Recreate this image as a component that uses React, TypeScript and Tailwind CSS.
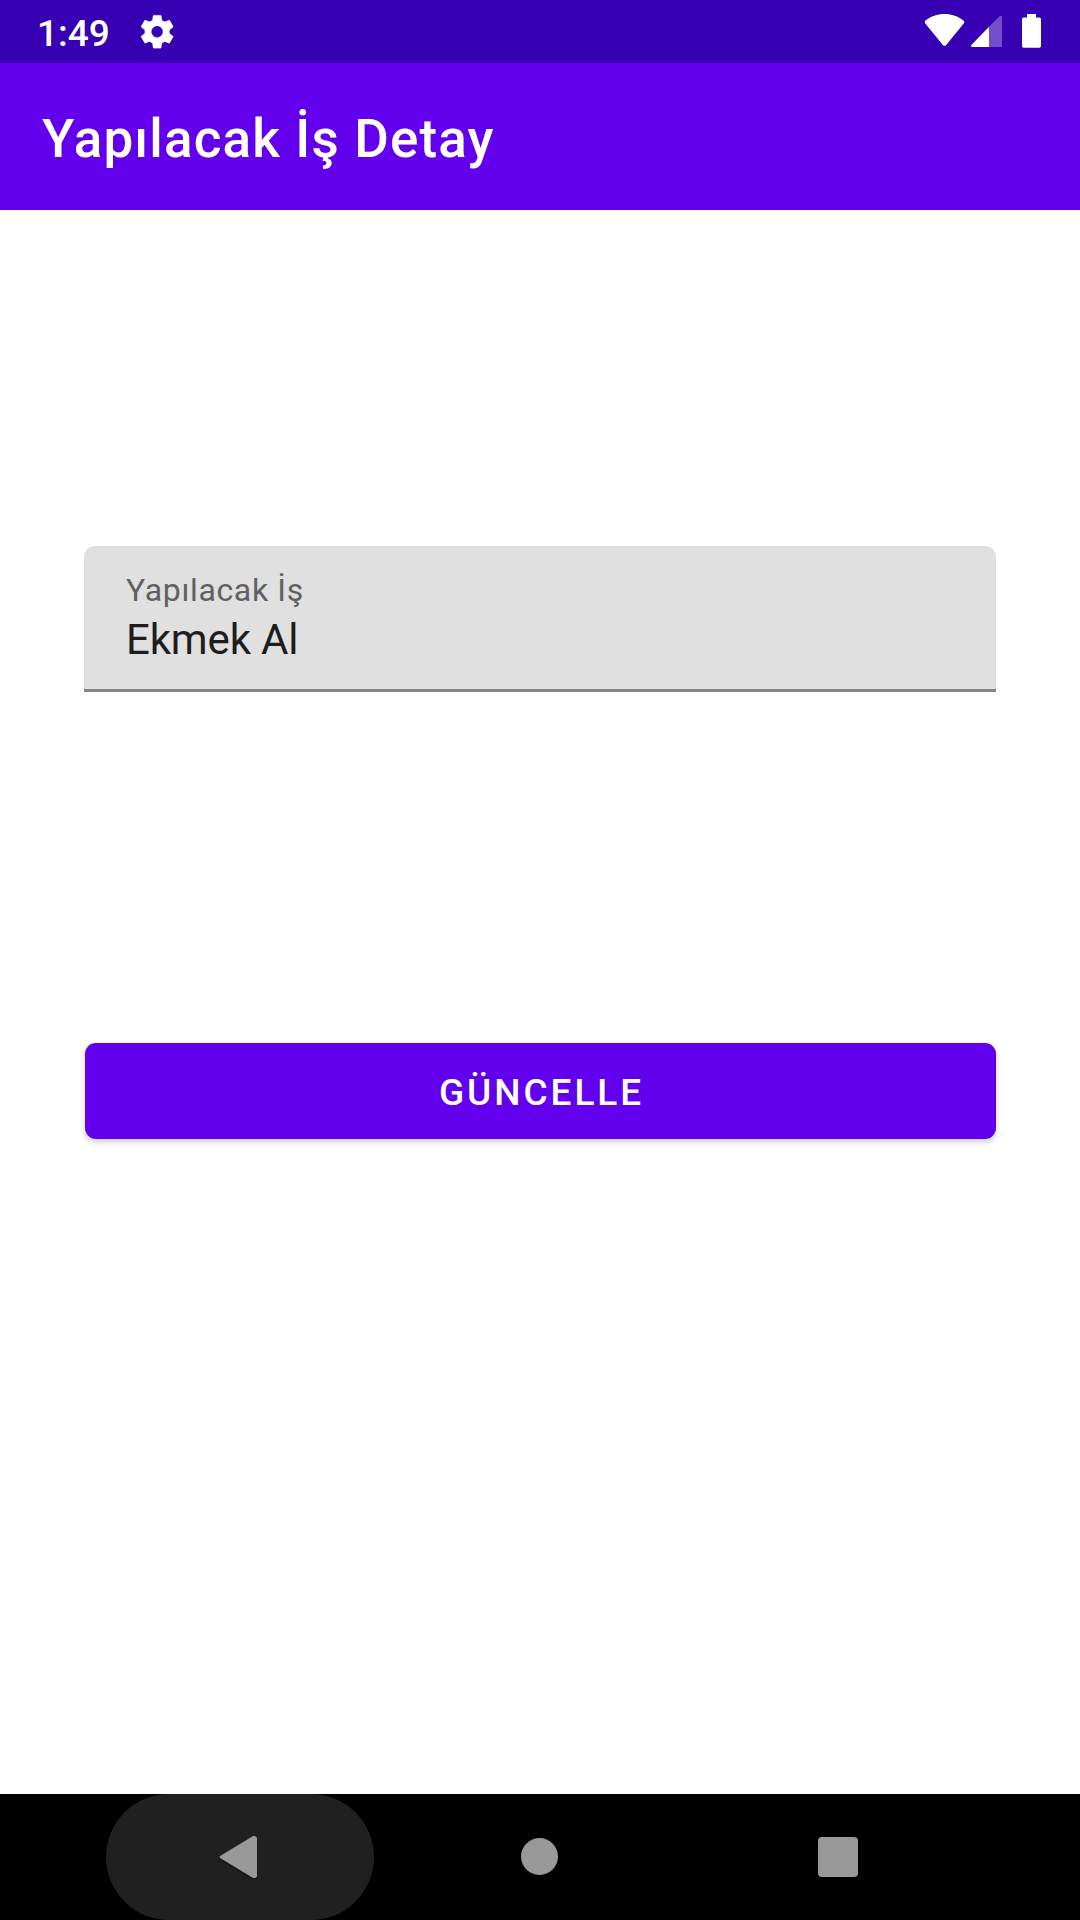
const gearPath =
  "M19.43 12.98c.04-.32.07-.64.07-.98s-.03-.66-.07-.98l2.11-1.65c.19-.15.24-.42.12-.64l-2-3.46c-.12-.22-.39-.3-.61-.22l-2.49 1c-.52-.4-1.08-.73-1.69-.98l-.38-2.65C14.46 2.18 14.25 2 14 2h-4c-.25 0-.46.18-.49.42l-.38 2.65c-.61.25-1.17.59-1.69.98l-2.49-1c-.23-.09-.49 0-.61.22l-2 3.46c-.13.22-.07.49.12.64l2.11 1.65c-.04.32-.07.65-.07.98s.03.66.07.98l-2.11 1.65c-.19.15-.24.42-.12.64l2 3.46c.12.22.39.3.61.22l2.49-1c.52.4 1.08.73 1.69.98l.38 2.65c.03.24.24.42.49.42h4c.25 0 .46-.18.49-.42l.38-2.65c.61-.25 1.17-.59 1.69-.98l2.49 1c.23.09.49 0 .61-.22l2-3.46c.12-.22.07-.49-.12-.64l-2.11-1.65zM12 15.5c-1.93 0-3.5-1.57-3.5-3.5s1.57-3.5 3.5-3.5 3.5 1.57 3.5 3.5-1.57 3.5-3.5 3.5z";

function StatusBar() {
  return (
    <header className="flex h-[63px] justify-between bg-[#3700b3] pr-[39px] pl-[37px] text-white">
      <div className="flex">
        <span className="w-[100px] pt-[12px] text-[37px] leading-[43px] font-medium">1:49</span>
        <svg className="mt-[12px] h-[40px] w-[40px]" viewBox="0 0 24.2 24.2" fill="currentColor">
          <path d={gearPath} stroke="currentColor" strokeWidth="0.15" transform="translate(0.2 -0.1)" />
        </svg>
      </div>
      <div className="flex pt-[14px]">
        <svg className="mr-[6px] h-[34px] w-[41px]" viewBox="0 0 41 34" fill="currentColor">
          <path d="M1.6 6.6C6.8 2.3 13.3 0 20.5 0s13.7 2.3 18.9 6.6c1 .8 1.1 2 .3 3L22 31.2c-.9 1-2.1 1-3 0L1.3 9.6c-.8-1-.7-2.2.3-3z" />
        </svg>
        <svg className="mr-[20px] h-[34px] w-[31px]" viewBox="0 0 31 34" fill="currentColor">
          <path d="M18 12.7V33H1.2c-1.2 0-1.6-1.1-.8-2z" />
          <path opacity=".3" d="M18 12.7 28.6 2.3c1-.9 2.4-.5 2.4.9V33H18z" />
        </svg>
        <svg className="h-[34px] w-[19px]" viewBox="0 0 19 34" fill="currentColor">
          <rect x="5" width="9" height="6" />
          <rect y="3.5" width="19" height="30.3" rx="1.7" />
        </svg>
      </div>
    </header>
  );
}

function NavigationBar() {
  return (
    <nav className="flex h-[126px] items-center bg-black pl-[106px] text-[#999999]">
      <button className="flex h-[126px] w-[268px] items-center rounded-full bg-[#202020] pl-[113px]">
        <svg className="h-[44px] w-[40px] drop-shadow-[0_2px_1px_rgba(0,0,0,0.3)]" viewBox="0 0 40 44" fill="currentColor">
          <path d="M1.9 20.4 33.3 1.4c2.2-1.2 4.7-.2 4.7 2.2v36.8c0 2.4-2.5 3.4-4.7 2.2L1.9 23.6c-1.7-1-1.7-2.2 0-3.2z" />
        </svg>
      </button>
      <button className="mt-[-1px] ml-[147px] h-[37px] w-[37px] rounded-full bg-[#999999]" />
      <button className="ml-[260px] h-[40px] w-[40px] rounded-[4px] bg-[#999999]" />
    </nav>
  );
}

export default function App() {
  return (
    <div className="flex h-[1920px] w-[1080px] flex-col overflow-hidden bg-white font-['Roboto',sans-serif]">
      <StatusBar />
      <div className="h-[147px] bg-[#6200ee] pt-[45px] pl-[42px]">
        <h1 className="text-[53px] leading-[62px] font-medium tracking-[1.14px] text-white">Yapılacak İş Detay</h1>
      </div>
      <main className="flex-1 px-[84px] pt-[336px]">
        <label className="block h-[146px] rounded-t-[11px] border-b-[3px] border-[#848484] bg-[#e0e0e0] pt-[25px] pl-[42px]">
          <span className="block text-[32px] leading-[38px] tracking-[0.65px] text-[#616161]">Yapılacak İş</span>
          <span className="block pt-[6px] text-[42px] leading-[50px] tracking-[-0.15px] text-[#1d1d1d]">Ekmek Al</span>
        </label>
        <button className="mt-[351px] ml-px flex h-[96px] w-[911px] items-center justify-center rounded-[11px] bg-[#6200ee] pt-[3px] pl-[2px] text-[37px] font-medium tracking-[2.95px] text-white shadow-[0_3px_6px_rgba(0,0,0,0.2)]">
          GÜNCELLE
        </button>
      </main>
      <NavigationBar />
    </div>
  );
}
